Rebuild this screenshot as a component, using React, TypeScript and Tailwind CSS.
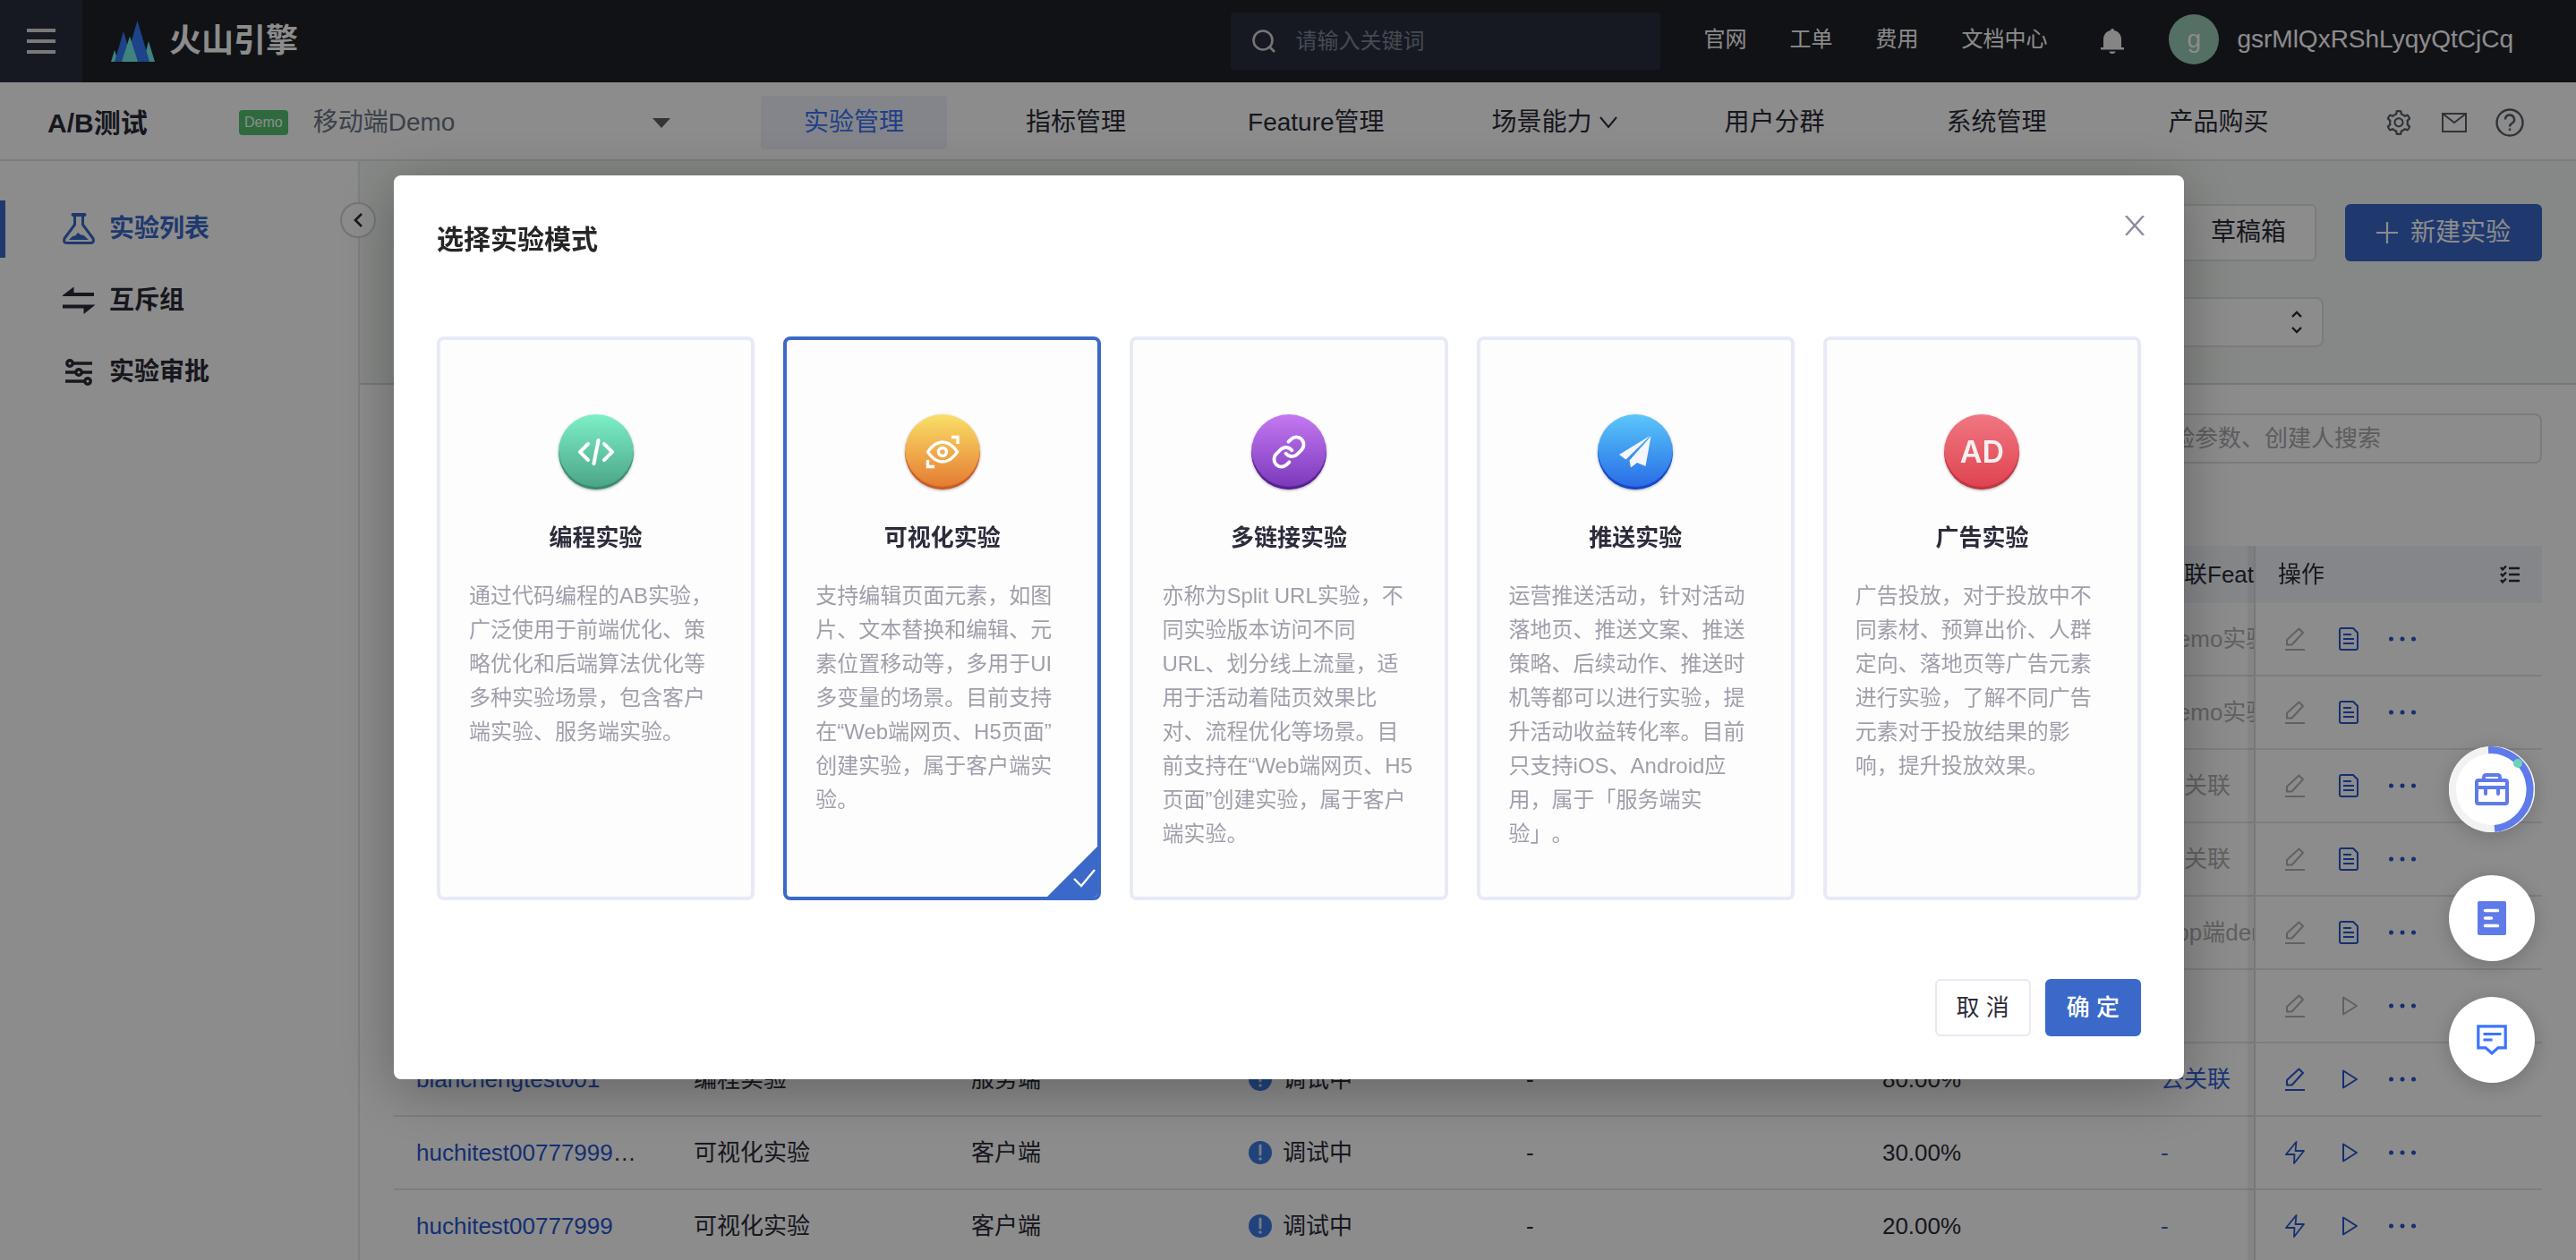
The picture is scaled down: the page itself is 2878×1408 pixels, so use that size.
import { useState } from 'react';
import type { ReactNode } from 'react';
import { AiOutlineSetting } from 'react-icons/ai';

const topLinks = ['官网', '工单', '费用', '文档中心'];

type Mode = { title: string; text: string; color: string; icon: ReactNode };

const modes: Mode[] = [
  {
    title: '编程实验',
    text: '通过代码编程的AB实验，广泛使用于前端优化、策略优化和后端算法优化等多种实验场景，包含客户端实验、服务端实验。',
    color: 'from-[#7df0c8] to-[#4aa385] shadow-[inset_0_-3px_1px_#3b8a6e,0_1px_3px_rgba(0,0,0,0.35)]',
    icon: (
      <svg viewBox="0 0 42 42" className="size-[42px]" fill="none" stroke="#fff" strokeWidth="4" strokeLinecap="round" strokeLinejoin="round">
        <path d="M12 12 3 21l9 9M30 12l9 9-9 9M23.500 8l-5 26" />
      </svg>
    ),
  },
  {
    title: '可视化实验',
    text: '支持编辑页面元素，如图片、文本替换和编辑、元素位置移动等，多用于UI多变量的场景。目前支持在“Web端网页、H5页面”创建实验，属于客户端实验。',
    color: 'from-[#f8df68] to-[#e27830] shadow-[inset_0_-3px_1px_#c95a24,0_1px_3px_rgba(0,0,0,0.35)]',
    icon: (
      <svg viewBox="0 0 40 40" className="size-10" fill="none" stroke="#fff" strokeWidth="3.400">
        <path d="M3.500 20Q11 9 20 9t16.500 11Q29 31 20 31T3.500 20z" strokeLinejoin="round" />
        <circle cx="20" cy="20" r="4.500" />
        <path d="M30 3.500h7V11M3.500 29v7.500H11" />
      </svg>
    ),
  },
  {
    title: '多链接实验',
    text: '亦称为Split URL实验，不同实验版本访问不同URL、划分线上流量，适用于活动着陆页效果比对、流程优化等场景。目前支持在“Web端网页、H5页面”创建实验，属于客户端实验。',
    color: 'from-[#c678f2] to-[#7836b8] shadow-[inset_0_-3px_1px_#561f90,0_1px_3px_rgba(0,0,0,0.35)]',
    icon: (
      <svg viewBox="0 0 24 24" className="size-10" fill="none" stroke="#fff" strokeWidth="2.300" strokeLinecap="round" strokeLinejoin="round">
        <path d="M10 13a5 5 0 0 0 7.540.540l3-3a5 5 0 0 0-7.070-7.070l-1.720 1.710" />
        <path d="M14 11a5 5 0 0 0-7.540-.540l-3 3a5 5 0 0 0 7.070 7.070l1.710-1.710" />
      </svg>
    ),
  },
  {
    title: '推送实验',
    text: '运营推送活动，针对活动落地页、推送文案、推送策略、后续动作、推送时机等都可以进行实验，提升活动收益转化率。目前只支持iOS、Android应用，属于「服务端实验」。',
    color: 'from-[#5cc6fa] to-[#2b68e4] shadow-[inset_0_-3px_1px_#1247c4,0_1px_3px_rgba(0,0,0,0.35)]',
    icon: (
      <svg viewBox="0 0 38 38" className="size-[38px]" fill="#f4f6fb">
        <path d="M35.500 1 1 22l7.500 5.500z" />
        <path d="M36.500 1.500 12.500 28.500l1.500 8 7-5.500 9.500 4z" />
      </svg>
    ),
  },
  {
    title: '广告实验',
    text: '广告投放，对于投放中不同素材、预算出价、人群定向、落地页等广告元素进行实验，了解不同广告元素对于投放结果的影响，提升投放效果。',
    color: 'from-[#f07682] to-[#de404e] shadow-[inset_0_-3px_1px_#bf3642,0_1px_3px_rgba(0,0,0,0.35)]',
    icon: <span className="font-['Inter',sans-serif] text-[34px] font-semibold leading-none text-[#f6f0f1]">AD</span>,
  },
];

type Row = {
  name?: string;
  type?: string;
  side?: string;
  status?: string;
  rate?: string;
  feature?: string;
  muted?: boolean;
  first: 'edit' | 'flash';
  second: 'doc' | 'play';
};

const rows: Row[] = [
  { feature: 'Demo实验', muted: true, first: 'edit', second: 'doc' },
  { feature: 'Demo实验', muted: true, first: 'edit', second: 'doc' },
  { feature: '去关联', muted: true, first: 'edit', second: 'doc' },
  { feature: '去关联', muted: true, first: 'edit', second: 'doc' },
  { feature: 'App端demo', muted: true, first: 'edit', second: 'doc' },
  { muted: true, first: 'edit', second: 'play' },
  { name: 'bianchengtest001', type: '编程实验', side: '服务端', status: '调试中', rate: '80.00%', feature: '去关联', first: 'edit', second: 'play' },
  { name: 'huchitest00777999001', type: '可视化实验', side: '客户端', status: '调试中', rate: '30.00%', feature: '-', first: 'flash', second: 'play' },
  { name: 'huchitest00777999', type: '可视化实验', side: '客户端', status: '调试中', rate: '20.00%', feature: '-', first: 'flash', second: 'play' },
];

function EditIcon() {
  return (
    <svg viewBox="0 0 22 26" className="h-[26px] w-[22px]" fill="none" stroke="currentColor" strokeWidth="2">
      <path d="M2 19.500V14L15.500 1.500l4.500 4.500L7.500 19.500z" strokeLinejoin="round" />
      <path d="M0 25h22" />
    </svg>
  );
}

function DocIcon() {
  return (
    <svg viewBox="0 0 22 26" className="h-[26px] w-[22px]" fill="none" stroke="currentColor" strokeWidth="2">
      <path d="M3 1h13l5 5v17a2 2 0 0 1-2 2H3a2 2 0 0 1-2-2V3a2 2 0 0 1 2-2zM5 8h9M5 13h12M5 18h12" strokeLinejoin="round" />
    </svg>
  );
}

function FlashIcon() {
  return (
    <svg viewBox="0 0 22 26" className="h-[26px] w-[22px]" fill="none" stroke="currentColor" strokeWidth="1.800" strokeLinejoin="round">
      <path d="M12.500 1 1 15h9.500L10 25l11-14h-9.500z" />
    </svg>
  );
}

function PlayIcon() {
  return (
    <svg viewBox="0 0 22 26" className="h-[26px] w-[22px]" fill="none" stroke="currentColor" strokeWidth="2" strokeLinejoin="round">
      <path d="M5 3.500v19L20 13z" />
    </svg>
  );
}

function DotsIcon() {
  return (
    <svg viewBox="0 0 30 6" className="h-[6px] w-[30px]" fill="currentColor">
      <circle cx="2.500" cy="3" r="2.500" />
      <circle cx="15" cy="3" r="2.500" />
      <circle cx="27.500" cy="3" r="2.500" />
    </svg>
  );
}

function TopBar() {
  return (
    <header className="flex h-[92px] items-center bg-[#1f2128] text-white">
      <button aria-label="菜单" className="flex size-[92px] flex-col items-center justify-center gap-2 bg-[#2a2f3e]">
        <span className="h-1 w-8 bg-[#dcdcdc]" />
        <span className="h-1 w-8 bg-[#dcdcdc]" />
        <span className="h-1 w-8 bg-[#dcdcdc]" />
      </button>
      <a href="#home" className="ml-8 flex items-center gap-4">
        <svg viewBox="124 20 49 46" className="h-[46px] w-[49px]">
          <path d="M166 43l7 23h-13z" fill="#73eee5" />
          <path d="M153.500 20 167 66h-27z" fill="#357bf9" />
          <path d="M128 53l4 13h-8z" fill="#73eee5" />
          <path d="M138 32l10 34h-20z" fill="#357bf9" />
          <path d="M145 37.500l9 28.500h-18z" fill="#73eee5" />
        </svg>
        <span className="text-4xl font-bold">火山引擎</span>
      </a>
      <label className="ml-auto flex h-16 w-[480px] items-center gap-[22px] rounded bg-[#292f3d] px-6">
        <svg viewBox="0 0 26 26" className="size-[26px] shrink-0" fill="none" stroke="#d5d5d5" strokeWidth="2.600">
          <circle cx="12" cy="12" r="10.500" />
          <path d="m19.500 19.500 5.500 5.500" />
        </svg>
        <input aria-label="搜索" placeholder="请输入关键词" className="w-full min-w-0 bg-transparent text-2xl outline-none placeholder:text-[#7f8896]" />
      </label>
      <nav className="ml-12 flex gap-12 pb-1 text-2xl">
        {topLinks.map((l) => (
          <a key={l} href="#link">{l}</a>
        ))}
      </nav>
      <button aria-label="通知" className="ml-[59px]">
        <svg viewBox="0 0 28 28" className="size-7" fill="#f2f2f2">
          <path d="M14 0a2 2 0 0 1 2 2c5 1 8 5 8 10v9h3v2.500H1V21h3v-9C4 7 7 3 12 2a2 2 0 0 1 2-2zM10.500 25.500h7a3.500 2.500 0 0 1-7 0z" />
        </svg>
      </button>
      <button className="ml-[49px] mr-[70px] flex items-center gap-5 pb-1 text-[28px]">
        <span className="flex size-14 items-center justify-center rounded-full bg-[#9acbb5]">g</span>
        <span>gsrMlQxRShLyqyQtCjCq</span>
      </button>
    </header>
  );
}

function SubBar() {
  return (
    <div className="flex h-[88px] items-center border-b-2 border-[#e2e4e4] bg-white pt-1 text-[28px] text-[#2a2a38]">
      <div className="flex w-[850px] items-center pl-[53px]">
        <h1 className="w-[214px] text-[30px] font-bold">A/B测试</h1>
        <span className="rounded bg-[#54c26f] px-[6px] text-base leading-7 text-white">Demo</span>
        <label className="ml-7 flex w-[399px] items-center">
          <select aria-label="应用" className="flex-1 appearance-none bg-transparent text-[#6b7785] outline-none">
            <option>移动端Demo</option>
          </select>
          <svg viewBox="0 0 20 11" className="h-[11px] w-5" fill="#5c5f63">
            <path d="M0 0h20L10 11z" />
          </svg>
        </label>
      </div>
      <nav className="flex items-center gap-10">
        <a href="#exp" className="rounded bg-[#eff2fc] px-12 py-[9px] text-[#3b74f6]">实验管理</a>
        <a href="#metric" className="px-12">指标管理</a>
        <a href="#feature" className="px-12">Feature管理</a>
        <a href="#scene" className="flex items-center gap-2 px-8">
          场景能力
          <svg viewBox="0 0 20 14" className="h-[14px] w-5" fill="none" stroke="currentColor" strokeWidth="2">
            <path d="m1 1 9 11 9-11" />
          </svg>
        </a>
        <a href="#group" className="px-12">用户分群</a>
        <a href="#system" className="px-12">系统管理</a>
        <a href="#buy" className="px-12">产品购买</a>
      </nav>
      <div className="ml-auto mr-[58px] flex items-center gap-8 text-[#565d66]">
        <button aria-label="设置"><AiOutlineSetting className="size-8" /></button>
        <button aria-label="消息">
          <svg viewBox="0 0 28 22" className="h-[22px] w-7" fill="none" stroke="currentColor" strokeWidth="2">
            <path d="M1 1h26v20H1zM1 1l13 10L27 1" />
          </svg>
        </button>
        <button aria-label="帮助">
          <svg viewBox="0 0 32 32" className="size-8" fill="none" stroke="currentColor" strokeWidth="2.400">
            <circle cx="16" cy="16" r="14.500" />
            <path d="M11 12.500a5 5 0 1 1 7.500 4.300c-1.800 1-2.500 1.700-2.500 3.700M16 22.500v2.600" />
          </svg>
        </button>
      </div>
    </div>
  );
}

function Sidebar() {
  const item = 'flex h-16 items-center gap-4 border-l-[6px] pl-16 text-[28px] font-bold';
  return (
    <aside className="relative w-[402px] shrink-0 border-r-2 border-[#e6e7e7] bg-white pt-11 text-[#2a2a38]">
      <nav className="flex flex-col gap-4">
        <a href="#list" className={`${item} border-[#3a69c9] text-[#3a69c9]`}>
          <svg viewBox="0 0 36 36" className="size-9" fill="none" stroke="currentColor" strokeWidth="3">
            <path d="M11.500 2h13" strokeWidth="4" strokeLinecap="round" />
            <path d="M13.500 3v10L2 28.500q-1.500 5 2.500 5h27q4 0 2.500-5L22.500 13V3" strokeLinejoin="round" />
            <path d="M7 30l4-4 3-.500 3-3.500 3.500 2.500 3 .500L29 30z" fill="currentColor" stroke="none" />
          </svg>
          实验列表
        </a>
        <a href="#mutex" className={`${item} border-transparent`}>
          <svg viewBox="0 0 36 36" className="size-9" fill="currentColor">
            <path d="M0 12 12.500 2.500v6.500H35v4H0zM36 23 23.500 33v-6.500H0v-4h36z" />
          </svg>
          互斥组
        </a>
        <a href="#review" className={`${item} border-transparent`}>
          <svg viewBox="0 0 36 36" className="size-9" fill="none" stroke="currentColor" strokeWidth="3.400">
            <circle cx="8" cy="8" r="3.200" />
            <circle cx="18" cy="18" r="3.200" />
            <circle cx="28" cy="28" r="3.200" />
            <path d="M12 8h21M3 18h11M22 18h11M3 28h21" />
          </svg>
          实验审批
        </a>
      </nav>
      <button aria-label="收起" className="absolute -right-5 top-[46px] flex size-10 items-center justify-center rounded-full border-2 border-[#d3d3db] bg-white">
        <svg viewBox="0 0 10 16" className="h-4 w-[10px]" fill="none" stroke="currentColor" strokeWidth="2.600">
          <path d="M9 1 2 8l7 7" />
        </svg>
      </button>
    </aside>
  );
}

function ExperimentTable() {
  const th = 'h-16 bg-[#f3f5fa] pl-[25px] text-left font-normal whitespace-nowrap';
  const td = 'h-[82px] border-b-2 border-[#e3e3ee] px-[25px] whitespace-nowrap overflow-hidden text-ellipsis';
  const fixed = 'sticky right-0 px-[25px] border-l-2 border-l-[#d9dbdb] shadow-[-7px_0_0_rgba(0,0,0,0.05)]';
  return (
    <div className="overflow-hidden">
      <table className="w-full min-w-[2580px] table-fixed border-separate border-spacing-0 text-[26px] text-[#2a2a38]">
        <colgroup>
          <col className="w-[310px]" />
          <col className="w-[310px]" />
          <col className="w-[310px]" />
          <col className="w-[310px]" />
          <col />
          <col className="w-[311px]" />
          <col className="w-[309px]" />
          <col className="w-[322px]" />
        </colgroup>
        <thead>
          <tr>
            <th colSpan={6} className={th} />
            <th className={th}>关联Feature</th>
            <th className={`${fixed} h-16 bg-[#f3f5fa] text-left font-normal`}>
              <div className="flex items-center justify-between">
                操作
                <button aria-label="列设置">
                  <svg viewBox="0 0 22 22" className="size-[22px]" fill="none" stroke="currentColor" strokeWidth="2.400">
                    <path d="M10 4h12M10 11h12M10 18h12M1 3l2 2.500L7 1.500M1 10l2 2.500 4-4M1 17l2 2.500 4-4" />
                  </svg>
                </button>
              </div>
            </th>
          </tr>
        </thead>
        <tbody>
          {rows.map((r, i) => (
            <tr key={i}>
              <td className={td}>{r.name && <a href="#detail" className="text-[#2657d0]">{r.name}</a>}</td>
              <td className={td}>{r.type}</td>
              <td className={td}>{r.side}</td>
              <td className={td}>
                {r.status && (
                  <span className="flex items-center gap-3">
                    <svg viewBox="0 0 26 26" className="size-[26px]">
                      <circle cx="13" cy="13" r="13" fill="#3c7be0" />
                      <path d="M13 5v10" stroke="#d5e2f8" strokeWidth="3" strokeLinecap="round" />
                      <circle cx="13" cy="20" r="1.800" fill="#d5e2f8" />
                    </svg>
                    {r.status}
                  </span>
                )}
              </td>
              <td className={td}>{r.status && '-'}</td>
              <td className={td}>{r.rate}</td>
              <td className="h-[82px] whitespace-nowrap border-b-2 border-[#e3e3ee] pl-[25px]">
                {r.feature && <a href="#feature" className={r.muted ? 'text-[#b1b1b1]' : 'text-[#3160d8]'}>{r.feature}</a>}
              </td>
              <td className={`${fixed} h-[82px] border-b-2 border-b-[#e3e3ee] bg-white text-[#2657d0]`}>
                <div className="flex items-center gap-[38px] pl-2">
                  <button aria-label="编辑" className={r.muted ? 'text-[#b1b1b1]' : ''}>
                    {r.first === 'edit' ? <EditIcon /> : <FlashIcon />}
                  </button>
                  <button aria-label="查看" className={r.muted && r.second === 'play' ? 'text-[#b1b1b1]' : ''}>
                    {r.second === 'doc' ? <DocIcon /> : <PlayIcon />}
                  </button>
                  <button aria-label="更多" className="-ml-1"><DotsIcon /></button>
                </div>
              </td>
            </tr>
          ))}
        </tbody>
      </table>
    </div>
  );
}

function MainArea() {
  return (
    <main className="min-w-0 flex-1 text-[#2a2a38]">
      <section className="border-b-2 border-[#d6d6e4] bg-[#f3f7f4] pb-10 pl-[38px] pr-[38px] pt-12">
        <div className="flex items-center justify-end gap-8 text-[28px]">
          <button className="h-16 rounded-md border-2 border-[#dfe2e2] bg-white px-8">草稿箱</button>
          <button className="flex h-16 items-center gap-[14px] rounded-md bg-[#3a69c9] px-[35px] text-white">
            <svg viewBox="0 0 24 24" className="size-6" stroke="currentColor" strokeWidth="2.200">
              <path d="M12 0v24M0 12h24" />
            </svg>
            新建实验
          </button>
        </div>
        <label className="mr-[244px] mt-10 flex h-14 items-center rounded-lg border-2 border-[#dfe2e2] bg-white px-5">
          <select aria-label="筛选" className="flex-1 appearance-none bg-transparent text-[26px] outline-none" />
          <svg viewBox="0 0 16 26" className="h-[26px] w-4" fill="none" stroke="currentColor" strokeWidth="2.400">
            <path d="m3 7 5-5 5 5M3 19l5 5 5-5" />
          </svg>
        </label>
      </section>
      <section className="bg-white pl-[38px] pr-[38px] pt-8">
        <div className="mb-[92px] flex justify-end">
          <input
            aria-label="搜索实验"
            placeholder="请输入实验名称、实验参数、创建人搜索"
            className="h-14 w-[670px] rounded-lg border-2 border-[#dfe2e2] bg-white pl-5 text-[26px] outline-none placeholder:text-[#a9a9ac]"
          />
        </div>
        <ExperimentTable />
      </section>
    </main>
  );
}

function ModeCard({ mode, checked, onSelect }: { mode: Mode; checked: boolean; onSelect: () => void }) {
  return (
    <label
      className={`relative flex min-h-[630px] cursor-pointer flex-col items-center overflow-hidden rounded-lg border-4 bg-[#fdfdfe] px-8 pt-[83px] ${checked ? 'border-[#3a69c9]' : 'border-[#e7eaf6]'}`}
    >
      <input type="radio" name="mode" checked={checked} onChange={onSelect} className="sr-only" />
      <span className={`flex size-[84px] items-center justify-center rounded-full bg-linear-to-b ${mode.color}`}>{mode.icon}</span>
      <span className="mt-9 text-[26px] font-bold leading-9 text-[#2c2c3a]">{mode.title}</span>
      <span className="mt-7 w-full text-2xl leading-[38px] text-[#9f9fac] [text-spacing-trim:space-all]">{mode.text}</span>
      {checked && (
        <svg viewBox="0 0 56 56" className="absolute bottom-0 right-0 size-14">
          <path d="M56 0v56H0z" fill="#3a69c9" />
          <path d="m30 36 8 8 15-18" fill="none" stroke="#fff" strokeWidth="2.400" />
        </svg>
      )}
    </label>
  );
}

function ModeDialog() {
  const [selected, setSelected] = useState(1);
  return (
    <div className="fixed inset-0 z-20 flex items-start justify-center bg-black/45 pl-[34px] pr-8 pt-[196px]">
      <div
        role="dialog"
        aria-modal="true"
        aria-labelledby="mode-title"
        className="w-full max-w-[2000px] rounded-lg bg-white p-12 shadow-[0_12px_64px_rgba(0,0,0,0.3)]"
      >
        <div className="flex h-11 items-center justify-between">
          <h2 id="mode-title" className="pt-1 text-[30px] font-bold leading-10 text-[#262626]">选择实验模式</h2>
          <button aria-label="关闭" className="-mr-1 mb-7">
            <svg viewBox="0 0 22 22" className="size-[22px]" stroke="#8d8aa5" strokeWidth="2.400">
              <path d="m1 0 20 22M21 0 1 22" />
            </svg>
          </button>
        </div>
        <div className="mt-[88px] grid grid-cols-5 gap-8">
          {modes.map((m, i) => (
            <ModeCard key={m.title} mode={m} checked={i === selected} onSelect={() => setSelected(i)} />
          ))}
        </div>
        <div className="mt-[88px] flex justify-end gap-4 text-[26px]">
          <button className="h-16 rounded-md border-2 border-[#e7eaf6] bg-white px-[22px] text-[#2c2c3a]">取 消</button>
          <button className="h-16 rounded-md bg-[#3a69c9] px-[24px] font-medium text-white">确 定</button>
        </div>
      </div>
    </div>
  );
}

function FloatingTools() {
  const round = 'flex size-24 items-center justify-center rounded-full bg-white shadow-[0_4px_24px_rgba(0,0,0,0.2)]';
  return (
    <div className="fixed right-[46px] top-[834px] z-30 flex flex-col">
      <button aria-label="工具箱" className={round}>
        <svg viewBox="0 0 96 96" className="size-24" fill="none">
          <circle cx="48" cy="48" r="44" stroke="#f2f2f2" strokeWidth="8" />
          <path d="M44 4.200a44 44 0 0 1 7 87.700" stroke="#5f7bea" strokeWidth="8" />
          <circle cx="77" cy="19" r="5" fill="#70d3b6" />
          <g stroke="#5f7bea" strokeWidth="4">
            <rect x="31" y="38" width="34" height="26" rx="2" />
            <path d="M39 37v-2q0-3 3-3h12q3 0 3 3v2M31 46h34" />
            <path d="M41 46v7M55 46v7" strokeLinecap="round" />
          </g>
        </svg>
      </button>
      <button aria-label="文档" className={`${round} mt-12`}>
        <svg viewBox="0 0 34 38" className="h-[38px] w-[34px]">
          <rect x="1" width="32" height="38" rx="2" fill="#5f7bea" />
          <path d="M9.500 10.500h14M9.500 19h7M9.500 27.500h14" stroke="#fff" strokeWidth="3.600" strokeLinecap="round" />
        </svg>
      </button>
      <button aria-label="反馈" className={`${round} mt-10`}>
        <svg viewBox="0 0 34 34" className="size-[34px]" fill="none" stroke="#3c74ff" strokeWidth="3.200">
          <path d="M1.800 1.800h30.400v24H24L17 32l-7-6.200H1.800zM7.500 10.500h20M7.500 17h10" />
        </svg>
      </button>
    </div>
  );
}

export default function App() {
  return (
    <div lang="zh-CN" className="flex h-screen flex-col overflow-hidden bg-white font-['Liberation_Sans','Noto_Sans_CJK_SC',sans-serif]">
      <TopBar />
      <SubBar />
      <div className="flex min-h-0 flex-1">
        <Sidebar />
        <MainArea />
      </div>
      <ModeDialog />
      <FloatingTools />
    </div>
  );
}
